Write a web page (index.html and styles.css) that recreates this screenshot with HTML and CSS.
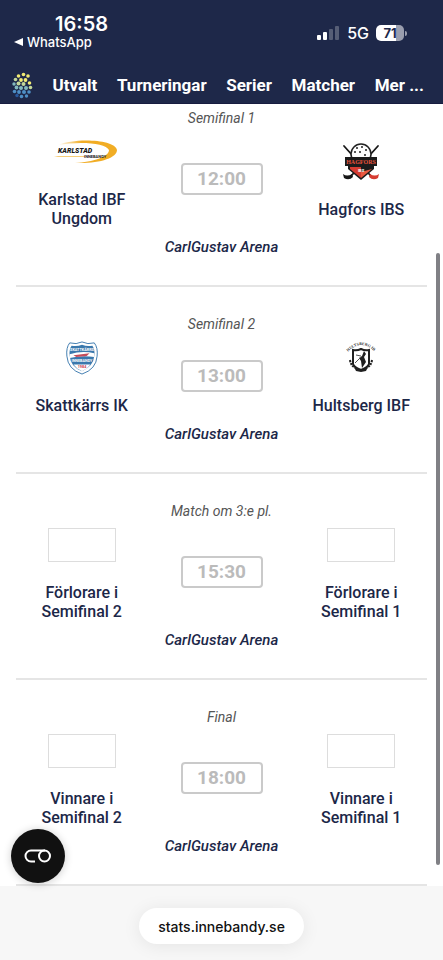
FILE: index.html
```html
<!DOCTYPE html>
<html lang="sv">
<head>
  <meta charset="UTF-8" />
  <meta name="viewport" content="width=device-width, initial-scale=1" />
  <title>Matcher - Innebandy</title>
  <link rel="stylesheet" href="styles.css">
</head>
<body>
  <header class="header">
    <div class="status">
      <div class="status-left">
        <div class="clock">16:58</div>
        <a href="#" class="back-app">
          <svg width="9" height="8" viewBox="0 0 9 8"><path d="M0 4L9 0v8z" fill="#fff"/></svg>
          WhatsApp
        </a>
      </div>
      <div class="status-right">
        <svg width="23" height="14" viewBox="0 0 23 14" fill="#fff">
          <rect x="0" y="9" width="4" height="5" rx="1"/>
          <rect x="6" y="6" width="4" height="8" rx="1"/>
          <rect x="12" y="3" width="4" height="11" rx="1" opacity=".25"/>
          <rect x="18" y="0" width="4" height="14" rx="1" opacity=".25"/>
        </svg>
        <span class="network">5G</span>
        <span class="battery">71</span>
      </div>
    </div>
    <nav class="nav">
      <a href="#" class="brand" aria-label="Innebandy">
        <svg width="21" height="27" viewBox="0 0 21 27">
          <g fill="#f1ea74"><circle cx="6.500" cy="4" r="1.800"/><circle cx="11.500" cy="2.500" r="1.800"/><circle cx="16" cy="4" r="1.800"/><circle cx="9" cy="8" r="1.900"/><circle cx="13.500" cy="8" r="1.900"/><circle cx="17.500" cy="11" r="1.800"/></g>
          <g fill="#c3d79a"><circle cx="3.500" cy="7.500" r="1.800"/><circle cx="6.500" cy="11.500" r="2"/><circle cx="11.500" cy="12" r="2"/><circle cx="18.500" cy="15.500" r="1.800"/></g>
          <g fill="#83b9bd"><circle cx="2" cy="12" r="1.700"/><circle cx="4.500" cy="15.500" r="1.900"/><circle cx="9" cy="16" r="2"/><circle cx="14" cy="16" r="2"/></g>
          <g fill="#4e8fc6"><circle cx="2.500" cy="19.500" r="1.800"/><circle cx="7" cy="20" r="1.900"/><circle cx="12" cy="20" r="2"/><circle cx="17" cy="20" r="1.800"/><circle cx="9.500" cy="24.500" r="1.800"/><circle cx="14.500" cy="24" r="1.700"/></g>
          <circle cx="5" cy="23.500" r="1.700" fill="#28599f"/>
        </svg>
      </a>
      <a href="#">Utvalt</a>
      <a href="#">Turneringar</a>
      <a href="#">Serier</a>
      <a href="#">Matcher</a>
      <a href="#">Mer ...</a>
    </nav>
  </header>

  <main class="matches">
    <section class="match">
      <div class="round">Semifinal 1</div>
      <div class="teams">
        <div class="team">
          <svg class="logo" viewBox="0 0 68 34">
            <defs>
              <linearGradient id="swoosh"><stop offset="0" stop-color="#f1ad25" stop-opacity="0"/><stop offset=".4" stop-color="#f1ad25"/></linearGradient>
            </defs>
            <path d="M10 10C26 3 67 4 69 15c0 8-18 14-42 13 18-1 34-6 34-13C58 8 32 6 10 10z" fill="url(#swoosh)"/>
            <path d="M6 21h31v1H10z" fill="#f6cd78"/>
            <text x="10" y="18" class="karlstad-name">KARLSTAD</text>
            <text x="36" y="23" class="karlstad-sub">INNEBANDY</text>
          </svg>
          <div class="team-name">Karlstad IBF Ungdom</div>
        </div>
        <div class="time"><span>12:00</span></div>
        <div class="team">
          <svg class="logo" viewBox="3 2 34 34">
            <g fill="none" stroke="#171717" stroke-width="1.800" stroke-linecap="round"><path d="M3 3l26 29q3 4 7 2M37 3L11 32q-3 4-7 2"/></g>
            <path d="M2 31q4 3 9 0l1 3q-4 4-9 1z" fill="#171717"/>
            <path d="M38 31q-4 3-9 0l-1 3q4 4 9 1z" fill="#d63c31"/>
            <circle cx="20" cy="11" r="10" fill="#fff" stroke="#222" stroke-width="1.500"/>
            <g fill="#222"><circle cx="16" cy="5" r="1"/><circle cx="21" cy="4" r="1"/><circle cx="25" cy="7" r="1"/><circle cx="14" cy="9" r="1"/><circle cx="19" cy="9" r="1"/><circle cx="24" cy="12" r="1"/></g>
            <path d="M7 16h26v10l-13 11L7 26z" fill="#1b1b1b"/>
            <path d="M9 24h11v11l-11-9z" fill="#d63c31"/><path d="M31 26l-11 9v-6z" fill="#e9583f"/>
            <path d="M4 14h32v9H4z" fill="#1b1b1b"/>
            <text x="20" y="21" class="hagfors-name">HAGFORS</text>
            <text x="20" y="29" class="hagfors-sub">IBS</text>
          </svg>
          <div class="team-name">Hagfors IBS</div>
        </div>
      </div>
      <div class="arena">CarlGustav Arena</div>
    </section>

    <section class="match">
      <div class="round">Semifinal 2</div>
      <div class="teams">
        <div class="team">
          <svg class="logo" viewBox="0 0 34 36">
            <path d="M4 2Q11 4 17 1q6 3 13 1 4 5 3 14-1 14-16 19Q2 30 1 16 0 7 4 2z" fill="#fff" stroke="#3978ad"/>
            <path d="M6 5q6 1 11-1 5 2 11 1 3 4 2 11-1 11-13 16Q5 28 4 16 3 9 6 5z" fill="#3978ad"/>
            <path d="M4 14q13-4 26-1v4q-13-2-26 1z" fill="#fff"/><path d="M8 15l17-2-3 3-11 1z" fill="#c54c5a"/>
            <text x="17" y="11" class="skatt-name">SKATTKÄRRS</text>
            <text x="17" y="22" class="skatt-name">INNEBANDY</text>
            <path d="M8 25h18l-4 4-5 3-5-3z" fill="#fff"/>
            <text x="17" y="29" class="skatt-year">1984</text>
          </svg>
          <div class="team-name">Skattkärrs IK</div>
        </div>
        <div class="time"><span>13:00</span></div>
        <div class="team">
          <svg class="logo" viewBox="0 0 34 34">
            <path id="hultsberg-arc" d="M4 11Q17 -3 31 11" fill="none"/>
            <text class="hultsberg-name"><textPath href="#hultsberg-arc">HULTSBERG IBF</textPath></text>
            <path d="M9 9q4 1 8-1 4 2 8 1v14q-1 3-8 6-7-3-8-6z" fill="#fff" stroke="#202020" stroke-width="2"/>
            <path d="M20 10l2 3-2 3 2 5-4 6-1-7-2-3 3-2z" fill="#202020"/><path d="M17 16l-6 6M17 15l-5-1" stroke="#555"/>
            <path d="M6 19q1 7 7 8M28 19q-1 7-7 8" fill="none" stroke="#202020" stroke-width="2" stroke-dasharray="2 1"/>
            <path d="M10 26l7 3 7-3-2 4-5 1-5-1z" fill="#202020"/>
          </svg>
          <div class="team-name">Hultsberg IBF</div>
        </div>
      </div>
      <div class="arena">CarlGustav Arena</div>
    </section>

    <section class="match">
      <div class="round">Match om 3:e pl.</div>
      <div class="teams">
        <div class="team">
          <div class="logo empty"></div>
          <div class="team-name">Förlorare i Semifinal 2</div>
        </div>
        <div class="time"><span>15:30</span></div>
        <div class="team">
          <div class="logo empty"></div>
          <div class="team-name">Förlorare i Semifinal 1</div>
        </div>
      </div>
      <div class="arena">CarlGustav Arena</div>
    </section>

    <section class="match">
      <div class="round">Final</div>
      <div class="teams">
        <div class="team">
          <div class="logo empty"></div>
          <div class="team-name">Vinnare i Semifinal 2</div>
        </div>
        <div class="time"><span>18:00</span></div>
        <div class="team">
          <div class="logo empty"></div>
          <div class="team-name">Vinnare i Semifinal 1</div>
        </div>
      </div>
      <div class="arena">CarlGustav Arena</div>
    </section>
  </main>

  <footer class="browser-bar">
    <button class="address">stats.innebandy.se</button>
  </footer>

  <!-- floating controls -->
  <button class="cookie-btn" aria-label="Cookies">
    <svg width="28" height="14" viewBox="0 0 28 14" fill="none" stroke="#fff" stroke-width="2">
      <path d="M11 12.500H7A5.500 5.500 0 0 1 7 1.500h14"/>
      <circle cx="20.500" cy="7" r="5.500"/>
    </svg>
  </button>
  <div class="scroll-thumb"></div>
</body>
</html>
```
FILE: styles.css
```css
* {
  box-sizing: border-box;
}

body {
  margin: 0;
  min-height: 100vh;
  display: flex;
  flex-direction: column;
  background: #fff;
  color: #1c2748;
  font-family: Roboto, "Liberation Sans", sans-serif;
}

a {
  color: inherit;
  text-decoration: none;
}

button {
  border: none;
  padding: 0;
  cursor: pointer;
}

.header {
  background: #1e2849;
  color: #fff;
  border-bottom: 1px solid #171c40;
}

.status {
  display: flex;
  justify-content: space-between;
  padding: 14px 39px 0 14px;
  height: 67px;
  font-family: Inter, sans-serif;
}

.clock {
  padding-left: 41px;
  font-size: 20px;
  font-weight: 600;
  line-height: 21px;
}

.back-app {
  display: flex;
  align-items: center;
  gap: 4px;
  font-size: 13px;
  font-weight: 500;
  line-height: 14px;
}

.status-right {
  display: flex;
  align-items: center;
  gap: 7px;
  height: 38px;
}

.network {
  font-size: 16px;
  font-weight: 500;
}

.battery {
  position: relative;
  width: 28px;
  border-radius: 5px;
  background: linear-gradient(to right, #fff 71%, #9a9eae 71%);
  color: #1e2849;
  font-size: 13px;
  font-weight: 700;
  line-height: 16px;
  text-align: center;
}

.battery::after {
  content: "";
  position: absolute;
  left: 29px;
  top: 6px;
  width: 2px;
  height: 5px;
  border-radius: 0 2px 2px 0;
  background: #9a9eae;
}

.nav {
  display: flex;
  justify-content: space-between;
  align-items: center;
  height: 36px;
  padding: 0 19px 0 12px;
  font-size: 17px;
  font-weight: 700;
}

.brand {
  display: flex;
}

.matches {
  padding: 0 16px;
}

.match {
  display: flex;
  flex-direction: column;
  padding: 28px 0;
  border-bottom: 2px solid #e5e5e5;
  text-align: center;
  line-height: 19px;
}

.match:first-child {
  padding-top: 5px;
}

.round {
  margin-bottom: 7px;
  color: #555;
  font-size: 14px;
  font-style: italic;
}

.teams {
  display: grid;
  grid-template-columns: 1fr 148px 1fr;
  align-items: center;
}

.team {
  display: flex;
  flex-direction: column;
  align-items: center;
  gap: 21px;
}

.logo {
  width: 68px;
  height: 34px;
  overflow: visible;
}

.empty {
  border: 1px solid #ddd;
}

.team-name {
  max-width: 106px;
  font-size: 16px;
  font-weight: 500;
}

.time {
  display: flex;
  justify-content: center;
  padding-bottom: 5px;
}

.time span {
  width: 82px;
  border: 2px solid #cacaca;
  border-radius: 4px;
  color: #bbb;
  font-size: 19px;
  font-weight: 700;
  line-height: 28px;
}

.arena {
  margin-top: 10px;
  font-size: 15px;
  font-style: italic;
  font-weight: 500;
}

.karlstad-name {
  fill: #171717;
  font: italic 900 7px Roboto, sans-serif;
}

.karlstad-sub {
  fill: #171717;
  font: bold 4px Roboto, sans-serif;
}

.hagfors-name {
  fill: #e9523b;
  font: bold 6px "Liberation Serif", serif;
  text-anchor: middle;
}

.hagfors-sub {
  fill: #fff;
  font: bold 4px Roboto, sans-serif;
  text-anchor: middle;
}

.skatt-name {
  fill: #fff;
  font: bold 4px Roboto, sans-serif;
  text-anchor: middle;
}

.skatt-year {
  fill: #c8404d;
  font: bold 4px Roboto, sans-serif;
  text-anchor: middle;
}

.hultsberg-name {
  fill: #333;
  font: bold 4px "Liberation Serif", serif;
}

.browser-bar {
  flex: 1;
  display: flex;
  justify-content: center;
  align-items: flex-start;
  padding: 22px 0 14px;
  background: #f7f7f7;
}

.address {
  height: 36px;
  padding: 0 19px;
  border-radius: 18px;
  background: #fff;
  box-shadow: 0 2px 18px rgba(0, 0, 0, 0.08);
  color: #111;
  font-family: Inter, sans-serif;
  font-size: 14px;
  font-weight: 500;
}

.cookie-btn {
  position: fixed;
  left: 11px;
  bottom: 77px;
  display: flex;
  justify-content: center;
  align-items: center;
  width: 54px;
  height: 54px;
  border-radius: 50%;
  background: #111;
  box-shadow: 0 1px 8px rgba(0, 0, 0, 0.2);
}

.scroll-thumb {
  position: fixed;
  top: 253px;
  right: 3px;
  bottom: 95px;
  width: 4px;
  border-radius: 2px;
  background: #808085;
}
```
